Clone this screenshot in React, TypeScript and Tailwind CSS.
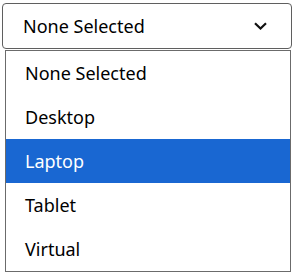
import React from "react";

const options = ["None Selected", "Desktop", "Laptop", "Tablet", "Virtual"];

const App = () => {
  const selected = "Laptop";

  return (
    <div className="w-[294px] h-[275px] bg-white pt-[3px] pl-[2px] font-['Noto_Sans',sans-serif] text-[18px] text-black">
      {/* Select box */}
      <div className="w-[290px] h-[46px] border border-[#5f5f5f] rounded-[4px] flex items-center justify-between pl-[20px] pr-[24px]">
        <span className="leading-none">None Selected</span>
        <svg width="13" height="8" viewBox="0 0 13 8" fill="none">
          <path d="M1 1.2 L6.5 6.5 L12 1.2" stroke="#111" strokeWidth="2.2" />
        </svg>
      </div>

      {/* Options list */}
      <div className="ml-[3px] mt-[1px] w-[286px] border border-[#6b6b6b]">
        {options.map((o) => (
          <div
            key={o}
            className={
              o === selected
                ? "h-[44px] flex items-center pl-[19px] bg-[#1967d2] text-white"
                : "h-[44px] flex items-center pl-[19px]"
            }
          >
            {o}
          </div>
        ))}
      </div>
    </div>
  );
};

export default App;
